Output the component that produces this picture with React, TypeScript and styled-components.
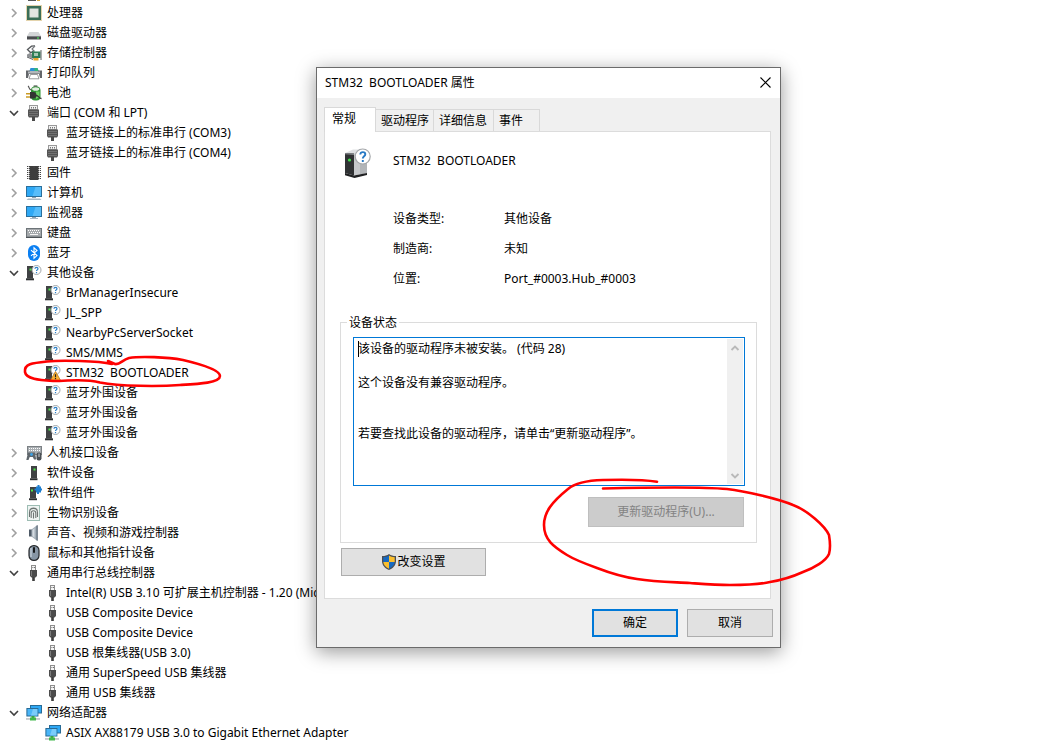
import React, { useState } from "react";
import styled, { createGlobalStyle, css } from "styled-components";

const GlobalStyle = createGlobalStyle`
  * { box-sizing: border-box; }
  body { margin: 0; background: #fff; }
  body, button, textarea {
    font-family: "Noto Sans", "Noto Sans CJK SC", sans-serif;
    font-size: 12px;
    line-height: 16px;
    color: #000;
  }
`;

/* ---------- icons ---------- */

const Svg16 = styled.svg`
  width: 16px;
  height: 16px;
  flex: none;
  display: block;
`;

const Icon = ({ children }: { children: React.ReactNode }) => (
  <Svg16 viewBox="0 0 16 16" aria-hidden="true">{children}</Svg16>
);

const CpuIcon = () => (
  <Icon>
    <rect x=".5" y=".5" width="15" height="15" fill="none" stroke="#c9a85a" strokeDasharray="1 1" />
    <rect x="1" y="1" width="14" height="14" fill="#3b6e57" />
    <rect x="4" y="4" width="8" height="8" fill="#e4e6e2" stroke="#dfe3de" strokeWidth="1" />
  </Icon>
);
const DriveIcon = () => (
  <Icon>
    <path d="M3.5 7h9L15 11H1z" fill="#d3d5d7" />
    <path d="M1 11h14v3.5H1z" fill="#4a4c4f" />
    <path d="M1 11h14v.8H1z" fill="#8a8c90" />
    <rect x="11" y="12.4" width="2" height="1.2" fill="#4be05a" />
  </Icon>
);
const StorageIcon = () => (
  <Icon>
    <path d="M9 .8L5.5 1.2 1.5 4.5l3.300 3.300L8 5.500" fill="none" stroke="#55585b" strokeWidth="1.300" />
    <path d="M9 1L6 4l2.500 2.500" fill="none" stroke="#76797c" strokeWidth="1.100" />
    <path d="M1 9.500l3-1.500 4 3v3L1 11.500z" fill="#8e9194" />
    <path d="M1 11.500l6 2.500v1L1 12.500z" fill="#5c5f62" />
    <rect x="6" y="6.500" width="8.500" height="6.500" fill="#2f7d55" />
    <rect x="8" y="8" width="4" height="3" fill="#a7c7b3" />
    <path d="M7.500 13h5v2.500h-5z" fill="#e5a52c" />
    <path d="M15 5v10" stroke="#5b5e60" />
  </Icon>
);
const PrinterIcon = () => (
  <Icon>
    <path d="M4.500 3h7l1 3h-9z" fill="#2b8fd6" />
    <path d="M8.500 3h3l1 3h-4z" fill="#35b57a" />
    <path d="M0 5.500h4v1h8v-1h4V13h-2l-1-4H3l-1 4H0z" fill="#63666a" />
    <path d="M2 6.500h12v2H2z" fill="#b4b8bc" />
    <path d="M4.500 9.500h7l1.500 4.300H3z" fill="#fff" stroke="#6d7073" strokeWidth=".7" />
  </Icon>
);
const BatteryIcon = () => (
  <Icon>
    <rect x="7.500" y=".3" width="4" height="2" rx=".6" fill="#777" />
    <rect x="5" y="1.500" width="9.500" height="14" rx="4" fill="#2d8f33" />
    <ellipse cx="9.700" cy="4" rx="3.600" ry="1.800" fill="#e3efe1" />
    <path d="M10 6.500h3.500v5.500L10 14z" fill="#6fd063" />
    <path d="M2 1c1.500 1 .5 3 3 4" stroke="#555" fill="none" strokeWidth="1.200" />
    <path d="M4 7h3c2.500 0 3.500 1.500 3.500 3.300S9.500 13.500 7 13.500H4z" fill="#333" />
    <path d="M0 8.700h4M0 12h4" stroke="#c99a24" strokeWidth="1.600" />
    <path d="M10 10.500c3 0 3 3 5.500 3" stroke="#333" fill="none" strokeWidth="1.300" />
  </Icon>
);
const PortIcon = () => (
  <Icon>
    <rect x="3.500" y=".5" width="8" height="4" fill="#f2f2f2" stroke="#999" />
    <path d="M5.500 2v1.500M7.500 2v1.500M9.500 2v1.500" stroke="#777" />
    <path d="M2 4.500h11V11l-1 1.500H3L2 11z" fill="#555" />
    <path d="M3 6.500h9M3 8.500h9M3 10.500h9" stroke="#808080" strokeWidth=".7" />
    <rect x="6" y="12" width="3" height="4" fill="#4a4a4a" />
  </Icon>
);
const ChipIcon = () => (
  <Icon>
    <path d="M1 1.500h14M1 3.500h14M1 5.500h14M1 7.500h14M1 9.500h14M1 11.500h14M1 13.500h14" stroke="#444" />
    <path d="M3.500 1H6.500l1.500 1.200L9.500 1h3v14h-9z" fill="#3d3d3d" />
    <path d="M2.500 1v14M13.500 1v14" stroke="#bbb" strokeDasharray="1 1" />
  </Icon>
);
const Screen = ({ stand }: { stand?: boolean }) => (
  <>
    <rect x=".5" y="1.500" width="15" height="10" fill="#2ea8f5" stroke="#2a6f9c" />
    <path d="M9.500 2H15v9H6.500z" fill="#57bdfa" />
    <rect x="6" y="12" width="4" height="1" fill="#8fa3b0" />
    <path d={stand ? "M2 13.500h12l1.500 1.500H.5z" : "M4 13h8v1H4z"} fill="#a9bac6" />
  </>
);
const ComputerIcon = () => <Icon><Screen stand /></Icon>;
const MonitorIcon = () => <Icon><Screen /></Icon>;
const KeyboardIcon = () => (
  <Icon>
    <rect x=".5" y="3.500" width="15" height="8.500" fill="#a4a8ab" stroke="#6d7478" />
    <path d="M2 5.500h12" stroke="#fff" strokeDasharray="1 1" />
    <path d="M3 7.500h11" stroke="#fff" strokeDasharray="1 1" />
    <path d="M4 9.500h8" stroke="#f4f4f4" />
    <path d="M0 12.500h16" stroke="#4d5357" />
  </Icon>
);
const BluetoothIcon = () => (
  <Icon>
    <rect x="2" y="0" width="12" height="16" rx="6" fill="#0a7ff2" />
    <path d="M5 5.200l6 5.400-3 2.600V2.800l3 2.600-6 5.400" fill="none" stroke="#fff" strokeWidth="1.100" />
  </Icon>
);
const Tower = () => (
  <>
    <path d="M1 1h6v12.500H1z" fill="#404244" />
    <path d="M0 13.300h8V15.300H0z" fill="#2f3133" />
    <rect x="3.500" y="3.500" width="2" height="2" fill="#4ce74a" />
  </>
);
const UnknownIcon = () => (
  <Icon>
    <Tower />
    <circle cx="10.500" cy="5" r="4.500" fill="#fff" stroke="#9b9fa2" strokeWidth=".9" />
    <path d="M9 3.800c0-2 3-1.900 3-.1 0 1.100-1.500 1.200-1.500 2.300M10.500 7v1.200" fill="none" stroke="#2c7fc6" strokeWidth="1.200" />
  </Icon>
);
const WarningDeviceIcon = () => (
  <Icon>
    <Tower />
    <circle cx="10.500" cy="5" r="4.500" fill="#fff" stroke="#9b9fa2" strokeWidth=".9" />
    <path d="M9 3.800c0-2 3-1.900 3-.1 0 1.100-1.500 1.200-1.500 2.300" fill="none" stroke="#2c7fc6" strokeWidth="1.200" />
    <path d="M10.500 6.500L15.500 15.300h-10z" fill="#f9b233" stroke="#b87916" strokeWidth=".8" />
    <path d="M10.500 9.200v3M10.500 13v1.200" stroke="#222" strokeWidth="1.200" />
  </Icon>
);
const HidIcon = () => (
  <Icon>
    <rect x="1.500" y="1.500" width="14" height="8" fill="#a9aeb2" stroke="#7b8084" />
    <path d="M3 3.500h11M3 5.500h11" stroke="#fff" strokeDasharray="1 1" />
    <path d="M2 7.500h7l1.200 7H8L6.800 12H3.700L2.500 15H.3z" fill="#5f666c" />
    <circle cx="5.500" cy="9.500" r="1.400" fill="#3da3e8" />
    <rect x="10.500" y="7.500" width="5" height="8" rx="2.200" fill="#4a4f54" />
    <path d="M13 8.500v3.500" stroke="#cfd3d6" />
  </Icon>
);
const SoftDeviceIcon = () => (
  <Icon>
    <path d="M5 1h6v12.300H5z" fill="#3f4143" />
    <path d="M4 13.300h7.500v1.900H4z" fill="#2b2d2f" />
    <rect x="7.500" y="3.500" width="2" height="2" fill="#4ce74a" />
  </Icon>
);
const ComponentIcon = () => (
  <Icon>
    <path d="M4 2h6v11.300H4z" fill="#3f4143" />
    <path d="M3 13.300h8v1.900H3z" fill="#2b2d2f" />
    <rect x="5" y="4.500" width="2" height="2" fill="#4ce74a" />
    <path d="M10 1.500h1.500V0h2v1.500H15v2h1v2h-1v2h-2V9h-2V7.500h-1v-2H8.500v-2H10z" fill="#1f7fd0" />
  </Icon>
);
const FingerprintIcon = () => (
  <Icon>
    <rect x="1.500" y=".5" width="12" height="15" fill="#eef4f2" stroke="#9dbcb3" />
    <path d="M3.500 12V7.500a4 4 0 0 1 8 0V12M5.200 13V8a2.300 2.300 0 0 1 4.600 0v5M7.500 7.500V13.500M3.500 5.500a4.500 4.500 0 0 1 8 0" fill="none" stroke="#6d7472" strokeWidth="1.100" />
  </Icon>
);
const SpeakerIcon = () => (
  <Icon>
    <path d="M3 4.500h3v7H3z" fill="#4e5a66" />
    <path d="M5.500 4.500L11 .3v15.400l-5.500-4.200z" fill="#a3afb9" />
    <path d="M10 1l2-1v16l-2-1z" fill="#7d8994" />
    <path d="M6.500 5l2-1.700v9.400l-2-1.700z" fill="#d5dce2" />
  </Icon>
);
const MouseIcon = () => (
  <Icon>
    <rect x="3" y=".6" width="10" height="14.800" rx="4.800" fill="#8796a5" stroke="#26292c" strokeWidth="1.200" />
    <path d="M5 3v9" stroke="#c6d1db" strokeWidth="1.300" />
    <rect x="7" y="2" width="2" height="6" rx="1" fill="#17191b" />
  </Icon>
);
const UsbIcon = () => (
  <Icon>
    <rect x="5.500" y=".5" width="4" height="5" fill="#f4f4f4" stroke="#8d8d8d" />
    <path d="M6.500 2.500h.8M8.200 2.500h.8" stroke="#555" />
    <path d="M4 5h7v6l-1.500 1.500h-4L4 11z" fill="#4c4c4c" />
    <path d="M5.500 6v5" stroke="#7c7c7c" />
    <rect x="6.200" y="12" width="2.600" height="4" fill="#3e3e3e" />
  </Icon>
);
const NetworkIcon = () => (
  <Icon>
    <rect x="4.500" y=".5" width="11" height="7.500" fill="#2ea8f5" stroke="#286b96" />
    <rect x=".9" y="3.500" width="11" height="7.500" fill="#49b5f8" stroke="#286b96" />
    <path d="M7 4l4.400 0v6.500H5z" fill="#7accfb" />
    <rect x="5.500" y="11" width="3" height="2" fill="#3aa545" />
    <path d="M0 13.200h14v1.500H0z" fill="#b9bec1" />
    <path d="M4 12.500h6v3H4z" fill="#43b84c" />
  </Icon>
);
const PartialIcon = () => (
  <svg width="16" height="2" viewBox="0 0 16 2" aria-hidden="true">
    <rect x="2" width="8" height="1" fill="#555" />
    <rect x="11" width="3" height="1" fill="#d3a63b" />
  </svg>
);
const ShieldIcon = () => (
  <Icon>
    <path d="M8 0c2 1.500 4 2 7 2v5c0 4-2.700 7.200-7 9-4.300-1.800-7-5-7-9V2c3 0 5-.5 7-2z" fill="#4b4f54" />
    <path d="M8 1.500V8H2.300V3.200C4.700 3.200 6.300 2.600 8 1.500z" fill="#1769c0" />
    <path d="M8 1.500V8h5.700V3.200C11.300 3.200 9.700 2.600 8 1.500z" fill="#fbbf2e" />
    <path d="M8 14.700V8H2.300c.4 3.200 2.400 5.300 5.700 6.700z" fill="#fbbf2e" />
    <path d="M8 14.700V8h5.700c-.4 3.200-2.400 5.300-5.700 6.700z" fill="#1769c0" />
  </Icon>
);
const DeviceLargeIcon = () => (
  <svg width="32" height="32" viewBox="0 0 32 32" aria-hidden="true">
    <path d="M3 7l8-3.500h13L13 7.500z" fill="#dfe1e3" />
    <path d="M12 7.500L25 4v23l-13 2.500z" fill="#c6c8cb" />
    <path d="M18 12l7-2v17l-7 1.500z" fill="#b2b5b8" />
    <path d="M3 7l9 .5v22L3 27z" fill="#303234" />
    <path d="M3 7l9 .5v1.500L3 8.300z" fill="#7f8286" />
    <path d="M3 27l9 2.500L25 27v2L12.500 32 3 29.200z" fill="#1f2022" />
    <circle cx="7.500" cy="14" r="1.600" fill="#3fe04a" />
    <circle cx="20.700" cy="10.500" r="7.500" fill="#fff" stroke="#a4a7aa" strokeWidth="1.200" />
    <path d="M18.300 8.500c.2-3.200 5-3 5-.2 0 2-2.500 2-2.500 4.200M20.800 14v2" fill="none" stroke="#2779c4" strokeWidth="1.900" />
  </svg>
);

/* ---------- device tree ---------- */

const Page = styled.div`
  position: relative;
  min-height: 100vh;
  overflow: hidden;
`;

const Tree = styled.ul`
  list-style: none;
  margin: 0;
  padding: 0 0 0 7px;
`;

const SubTree = styled.ul`
  list-style: none;
  margin: 0;
  padding: 0 0 0 38px;
`;

const ClippedRow = styled.li`
  height: 3px;
  padding-left: 19px;
  display: flex;
  align-items: flex-start;
`;

const Row = styled.div`
  display: flex;
  align-items: center;
  height: 20px;
  gap: 5px;
  white-space: pre;
`;

const Toggle = styled.button`
  width: 14px;
  height: 16px;
  padding: 0;
  border: 0;
  background: none;
  display: grid;
  place-items: center;
  flex: none;
`;

const Chevron = ({ open }: { open?: boolean }) => (
  <svg width="10" height="10" viewBox="0 0 10 10" fill="none" aria-hidden="true">
    {open ? (
      <path d="M1 3l4 4 4-4" stroke="#404040" strokeWidth="1.600" />
    ) : (
      <path d="M3 1l4 4-4 4" stroke="#a0a0a0" strokeWidth="1.600" />
    )}
  </svg>
);

type IconType = () => React.ReactElement;
interface Leaf { label: string; icon: IconType }
interface Category extends Leaf { items?: Leaf[] }

const leaf = (icon: IconType) => (label: string): Leaf => ({ label, icon });

const categories: Category[] = [
  { label: "处理器", icon: CpuIcon },
  { label: "磁盘驱动器", icon: DriveIcon },
  { label: "存储控制器", icon: StorageIcon },
  { label: "打印队列", icon: PrinterIcon },
  { label: "电池", icon: BatteryIcon },
  {
    label: "端口 (COM 和 LPT)", icon: PortIcon,
    items: ["蓝牙链接上的标准串行 (COM3)", "蓝牙链接上的标准串行 (COM4)"].map(leaf(PortIcon)),
  },
  { label: "固件", icon: ChipIcon },
  { label: "计算机", icon: ComputerIcon },
  { label: "监视器", icon: MonitorIcon },
  { label: "键盘", icon: KeyboardIcon },
  { label: "蓝牙", icon: BluetoothIcon },
  {
    label: "其他设备", icon: UnknownIcon,
    items: [
      ...["BrManagerInsecure", "JL_SPP", "NearbyPcServerSocket", "SMS/MMS"].map(leaf(UnknownIcon)),
      { label: "STM32  BOOTLOADER", icon: WarningDeviceIcon },
      ...["蓝牙外围设备", "蓝牙外围设备", "蓝牙外围设备"].map(leaf(UnknownIcon)),
    ],
  },
  { label: "人机接口设备", icon: HidIcon },
  { label: "软件设备", icon: SoftDeviceIcon },
  { label: "软件组件", icon: ComponentIcon },
  { label: "生物识别设备", icon: FingerprintIcon },
  { label: "声音、视频和游戏控制器", icon: SpeakerIcon },
  { label: "鼠标和其他指针设备", icon: MouseIcon },
  {
    label: "通用串行总线控制器", icon: UsbIcon,
    items: [
      "Intel(R) USB 3.10 可扩展主机控制器 - 1.20 (Microsoft)",
      "USB Composite Device",
      "USB Composite Device",
      "USB 根集线器(USB 3.0)",
      "通用 SuperSpeed USB 集线器",
      "通用 USB 集线器",
    ].map(leaf(UsbIcon)),
  },
  {
    label: "网络适配器", icon: NetworkIcon,
    items: [{ label: "ASIX AX88179 USB 3.0 to Gigabit Ethernet Adapter", icon: NetworkIcon }],
  },
];

/* ---------- dialog ---------- */

const Dialog = styled.section`
  position: absolute;
  left: 316px;
  top: 67px;
  width: 465px;
  background: #f0f0f0;
  border: 1px solid #6b6b6b;
  box-shadow: 0 4px 18px rgba(0, 0, 0, 0.4);
  padding-bottom: 10px;
`;

const TitleBar = styled.header`
  display: flex;
  align-items: center;
  justify-content: space-between;
  height: 30px;
  padding: 0 7px 0 8px;
  background: #fff;
`;

const Title = styled.h1`
  margin: 0;
  font-size: 12px;
  font-weight: 400;
  white-space: pre;
`;

const CloseButton = styled.button`
  width: 16px;
  height: 16px;
  padding: 0 0 1px;
  border: 0;
  background: none;
  display: grid;
  place-items: center;
`;

const Tabs = styled.div`
  display: flex;
  align-items: flex-end;
  height: 33px;
  padding: 0 7px;
`;

const Tab = styled.button<{ $width: number; $selected?: boolean }>`
  width: ${(p) => p.$width}px;
  height: 22px;
  padding: 0 0 0 5px;
  text-align: left;
  border: 1px solid #d9d9d9;
  border-width: 1px 1px 0 0;
  background: #f0f0f0;
  white-space: nowrap;
  ${(p) =>
    p.$selected &&
    css`
      height: 25px;
      margin-bottom: -1px;
      padding: 0 0 3px 7px;
      border-left-width: 1px;
      background: #fff;
      position: relative;
      z-index: 1;
    `}
`;

const Panel = styled.div`
  margin: 0 9px 0 7px;
  padding: 14px 13px 22px 15px;
  background: #fff;
  border: 1px solid #dcdcdc;
`;

const DeviceHeading = styled.div`
  display: flex;
  align-items: center;
  gap: 19px;
  height: 32px;
  padding-left: 2px;
`;

const DeviceName = styled.h2`
  margin: 0;
  padding-bottom: 2px;
  font-size: 12px;
  font-weight: 400;
  white-space: pre;
`;

const Facts = styled.dl`
  display: grid;
  grid-template-columns: 111px 1fr;
  grid-auto-rows: 30px;
  align-items: center;
  margin: 26px 0 19px;
  padding-left: 53px;

  dd { margin: 0; }
`;

const StatusGroup = styled.fieldset`
  margin: 0;
  padding: 6px 11px 15px 12px;
  border: 1px solid #dcdcdc;

  legend {
    padding: 2px 2px 0;
    margin-left: -6px;
  }
`;

const StatusBox = styled.div`
  position: relative;
  display: flex;
  height: 149px;
  padding: 1px;
  border: 1px solid #0078d7;
  background: #fff;
`;

const StatusText = styled.textarea`
  flex: 1;
  min-width: 0;
  height: 100%;
  padding: 1px 3px;
  border: 0;
  outline: 0;
  resize: none;
  overflow: hidden;
  background: transparent;
  line-height: 17px;
`;

const Caret = styled.span`
  position: absolute;
  left: 4px;
  top: 3px;
  width: 1px;
  height: 16px;
  background: #000;
`;

const ScrollTrack = styled.div`
  width: 16px;
  display: flex;
  flex-direction: column;
  justify-content: space-between;
  align-items: center;
  padding: 5px 0 4px;
  background: #f0f0f0;
`;

const PushButton = styled.button<{ $width: number; $height: number; $primary?: boolean }>`
  display: flex;
  align-items: center;
  justify-content: center;
  width: ${(p) => p.$width}px;
  height: ${(p) => p.$height}px;
  padding: 0;
  background: #e1e1e1;
  border: ${(p) => (p.$primary ? "2px solid #0078d7" : "1px solid #adadad")};

  &:disabled {
    background: #ccc;
    border-color: #bfbfbf;
    color: #838383;
  }
`;

const UpdateRow = styled.div`
  display: flex;
  justify-content: flex-end;
  padding: 11px 1px 0 0;
`;

const ChangeRow = styled.div`
  padding: 5px 0 0 1px;
`;

const Actions = styled.footer`
  display: flex;
  justify-content: flex-end;
  gap: 9px;
  padding: 10px 7px 0;
`;

/* ---------- hand-drawn marks ---------- */

const Ink = styled.svg<{ $x: number; $y: number }>`
  position: absolute;
  left: ${(p) => p.$x}px;
  top: ${(p) => p.$y}px;
  pointer-events: none;
  fill: none;
  stroke: #f00;
  stroke-width: 2.6;
  stroke-linecap: round;
  stroke-linejoin: round;
`;

const STATUS = `该设备的驱动程序未被安装。 (代码 28)

这个设备没有兼容驱动程序。


若要查找此设备的驱动程序，请单击“更新驱动程序”。`;

const TABS = [
  { label: "常规", width: 52 },
  { label: "驱动程序", width: 58 },
  { label: "详细信息", width: 60 },
  { label: "事件", width: 46 },
];

const FACTS = [
  ["设备类型:", "其他设备"],
  ["制造商:", "未知"],
  ["位置:", "Port_#0003.Hub_#0003"],
];

export default function App() {
  const [tab, setTab] = useState("常规");
  return (
    <Page>
      <GlobalStyle />
      <main>
        <Tree>
          <ClippedRow><PartialIcon /></ClippedRow>
          {categories.map((c) => (
            <li key={c.label}>
              <Row>
                <Toggle aria-label={c.label} aria-expanded={!!c.items}><Chevron open={!!c.items} /></Toggle>
                <c.icon />
                <span>{c.label}</span>
              </Row>
              {c.items && (
                <SubTree>
                  {c.items.map((item, i) => (
                    <li key={i}>
                      <Row><item.icon /><span>{item.label}</span></Row>
                    </li>
                  ))}
                </SubTree>
              )}
            </li>
          ))}
        </Tree>
      </main>

      <Dialog role="dialog" aria-labelledby="dialog-title">
        <TitleBar>
          <Title id="dialog-title">{"STM32  BOOTLOADER 属性"}</Title>
          <CloseButton aria-label="关闭">
            <svg width="11" height="11" viewBox="0 0 11 11" aria-hidden="true">
              <path d="M.5.5l10 10M10.500.5l-10 10" stroke="#000" strokeWidth="1.100" />
            </svg>
          </CloseButton>
        </TitleBar>
        <Tabs role="tablist">
          {TABS.map((t) => (
            <Tab
              key={t.label}
              role="tab"
              aria-selected={tab === t.label}
              $selected={tab === t.label}
              $width={t.width}
              onClick={() => setTab(t.label)}
            >
              {t.label}
            </Tab>
          ))}
        </Tabs>
        <Panel role="tabpanel">
          <DeviceHeading>
            <DeviceLargeIcon />
            <DeviceName>{"STM32  BOOTLOADER"}</DeviceName>
          </DeviceHeading>
          <Facts>
            {FACTS.map(([k, v]) => (
              <React.Fragment key={k}>
                <dt>{k}</dt>
                <dd>{v}</dd>
              </React.Fragment>
            ))}
          </Facts>
          <StatusGroup>
            <legend>设备状态</legend>
            <StatusBox>
              <StatusText readOnly aria-label="设备状态" value={STATUS} />
              <Caret />
              <ScrollTrack aria-hidden="true">
                <svg width="10" height="8" viewBox="0 0 10 8" fill="none">
                  <path d="M1.500 6L5 2.500 8.500 6" stroke="#b9b9b9" strokeWidth="1.900" />
                </svg>
                <svg width="10" height="8" viewBox="0 0 10 8" fill="none">
                  <path d="M1.500 2L5 5.500 8.500 2" stroke="#b9b9b9" strokeWidth="1.900" />
                </svg>
              </ScrollTrack>
            </StatusBox>
            <UpdateRow>
              <PushButton $width={156} $height={30} disabled>更新驱动程序(U)...</PushButton>
            </UpdateRow>
          </StatusGroup>
          <ChangeRow>
            <PushButton $width={145} $height={28}><ShieldIcon />改变设置</PushButton>
          </ChangeRow>
        </Panel>
        <Actions>
          <PushButton $width={86} $height={28} $primary>确定</PushButton>
          <PushButton $width={86} $height={28}>取消</PushButton>
        </Actions>
      </Dialog>

      <Ink $x={20} $y={352} width="206" height="40" viewBox="20 352 206 40" aria-hidden="true">
        <path d="M112 364C98 361 62 360 47 361.500S24 364 25 372c1 7 14 8 28 9 18 0 30-3 47 1.500 20 4 60 4 80 2.500 18-1 40-2 40-9 0-6-20-12-37-16-16-3-43-4-54-2-7 2-9 7-14 6l-7-3" />
      </Ink>
      <Ink $x={540} $y={474} width="296" height="116" viewBox="540 474 296 116" aria-hidden="true">
        <path d="M657 481.700C640 479 620 479.500 603 480S575 483 568 489C552 502 544 512 544 525c0 15 10 22 23 30 8 5 19 9 30 13 13 5 26 9 40 11 18 3 35 3 53 4 14 1 26 2 40 2s28 0 40-3c12-2 22-5 33-10 11-4 23-11 26-18 2-7 1-13 0-19-4-9-22-25-36-30-14-6-48-14-66-16C706 487 663 487 603 488.500" />
      </Ink>
    </Page>
  );
}
